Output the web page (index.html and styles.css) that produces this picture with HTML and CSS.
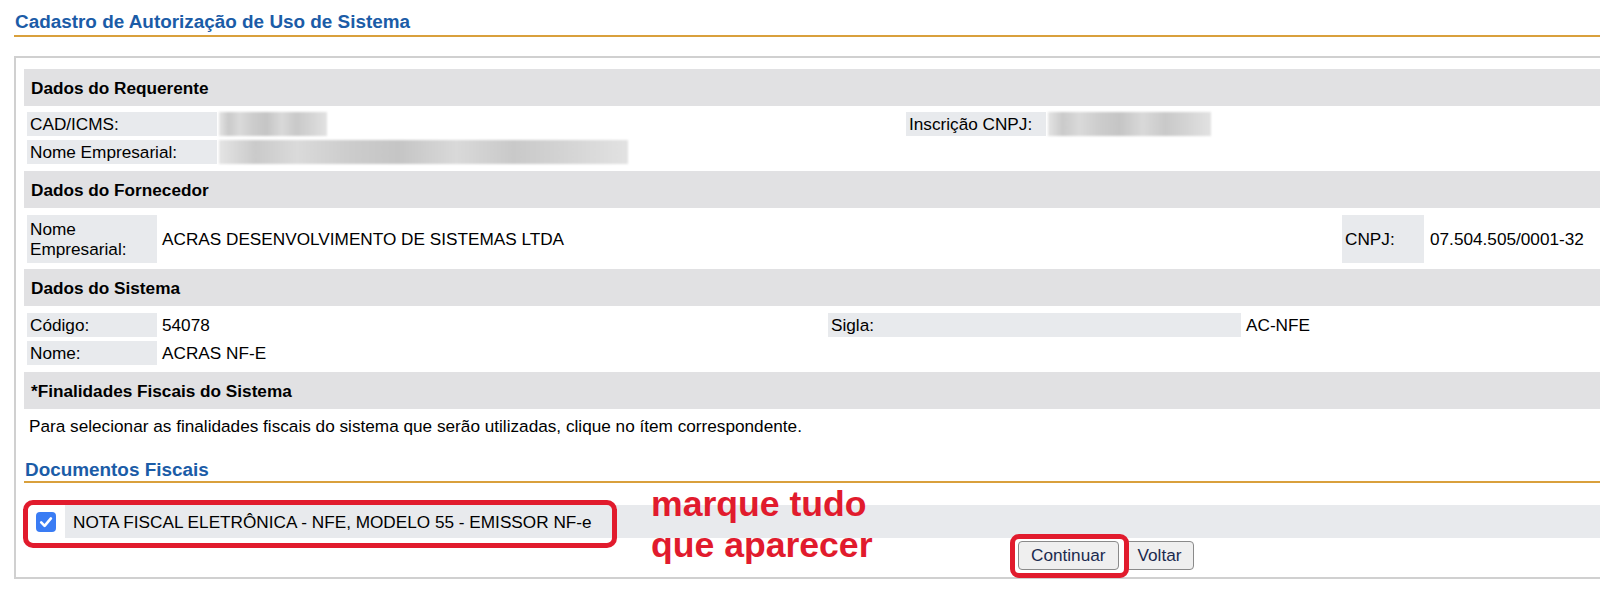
FILE: index.html
```html
<!DOCTYPE html>
<html lang="pt-BR">
<head>
<meta charset="utf-8">
<title>Cadastro de Autorização de Uso de Sistema</title>
<link rel="stylesheet" href="styles.css">
</head>
<body>
<div class="page">
  <h1 class="title">Cadastro de Autorização de Uso de Sistema</h1>
  <div class="panel">
    <section class="section">
      <div class="band">Dados do Requerente</div>
      <div class="rows grid-req">
        <div class="lbl">CAD/ICMS:</div>
        <div class="val blurcell"><span class="blur w-cad"></span></div>
        <div class="lbl">Inscrição CNPJ:</div>
        <div class="val blurcell"><span class="blur w-cnpj"></span></div>
        <div class="lbl">Nome Empresarial:</div>
        <div class="val blurcell"><span class="blur w-nome"></span></div>
      </div>
    </section>
    <section class="section">
      <div class="band">Dados do Fornecedor</div>
      <div class="rows grid-forn">
        <div class="lbl">Nome<br>Empresarial:</div>
        <div class="val">ACRAS DESENVOLVIMENTO DE SISTEMAS LTDA</div>
        <div class="lbl">CNPJ:</div>
        <div class="val val-cnpj">07.504.505/0001-32</div>
      </div>
    </section>
    <section class="section">
      <div class="band">Dados do Sistema</div>
      <div class="rows grid-sis">
        <div class="lbl">Código:</div>
        <div class="val">54078</div>
        <div class="lbl">Sigla:</div>
        <div class="val">AC-NFE</div>
        <div class="lbl">Nome:</div>
        <div class="val">ACRAS NF-E</div>
      </div>
    </section>
    <section class="section">
      <div class="band">*Finalidades Fiscais do Sistema</div>
      <p class="hint">Para selecionar as finalidades fiscais do sistema que serão utilizadas, clique no ítem correspondente.</p>
    </section>
    <h2 class="subtitle">Documentos Fiscais</h2>
    <div class="docwrap">
      <div class="docrow">
        <div class="chkcell">
          <span class="chk">
            <svg width="20" height="20" viewBox="0 0 20 20"><path d="M5.2 10.4 L8.6 13.8 L14.9 6.4" fill="none" stroke="#fff" stroke-width="2.6" stroke-linecap="round" stroke-linejoin="round"/></svg>
          </span>
        </div>
        <div class="doccell">NOTA FISCAL ELETRÔNICA - NFE, MODELO 55 - EMISSOR NF-e</div>
      </div>
      <span class="mark mark-doc"></span>
      <div class="note">marque tudo<br>que aparecer</div>
    </div>
    <div class="actions">
      <span class="btnwrap">
        <button class="btn" type="button">Continuar</button>
        <span class="mark mark-btn"></span>
      </span>
      <button class="btn" type="button">Voltar</button>
    </div>
  </div>
</div>
</body>
</html>
```

FILE: styles.css
```css
html, body {
  margin: 0;
  padding: 0;
  background: #ffffff;
}
body {
  overflow: hidden;
  font-family: "Liberation Sans", Arial, sans-serif;
  font-size: 17.2px;
  line-height: 20px;
  color: #000;
}
.page {
  padding-left: 14px;
}
.title {
  margin: 0;
  padding: 11px 0 2px 1px;
  font-size: 18.9px;
  line-height: 22px;
  font-weight: bold;
  color: #1b5ca7;
  border-bottom: 2px solid #d9a03c;
}
.panel {
  margin-top: 19px;
  border: 2px solid #d0d0d0;
  border-right: 0;
  padding: 11px 0 7px 8px;
}
.band {
  height: 37px;
  display: flex;
  align-items: center;
  padding-left: 7px;
  background: #e1e1e3;
  font-weight: bold;
}
.rows {
  display: grid;
  column-gap: 2px;
  row-gap: 4px;
  padding: 6px 0 7px 3px;
  grid-auto-rows: 24px;
}
.grid-req {
  grid-template-columns: 190px 685px 140px 1fr;
}
.grid-forn {
  grid-template-columns: 130px 1181px 82px 1fr;
  grid-auto-rows: 48px;
  padding-top: 7px;
  padding-bottom: 6px;
}
.grid-sis {
  grid-template-columns: 130px 667px 413px 1fr;
  padding-top: 7px;
}
.lbl {
  background: #e8eaed;
  padding-left: 3px;
  display: flex;
  align-items: center;
  white-space: nowrap;
}
.val {
  padding-left: 3px;
  display: flex;
  align-items: center;
  white-space: nowrap;
}
.val-cnpj {
  padding-left: 4px;
}
.blurcell {
  padding-left: 0;
  align-items: stretch;
}
.blur {
  display: block;
  height: 100%;
  background: linear-gradient(90deg, #e4e4e4 0%, #cacaca 9%, #dadada 19%, #cdcdcd 31%, #c5c5c5 44%, #d9d9d9 58%, #c9c9c9 72%, #d5d5d5 86%, #e2e2e2 100%);
  filter: blur(1px);
}
.w-cad { width: 108px; }
.w-cnpj { width: 163px; }
.w-nome { width: 409px; }
.hint {
  margin: 7px 0 0 2px;
  padding-left: 3px;
  line-height: 20px;
}
.subtitle {
  margin: 23px 0 0 0;
  padding-left: 1px;
  font-size: 18.9px;
  line-height: 22px;
  font-weight: bold;
  color: #1b5ca7;
  border-bottom: 2px solid #d9a03c;
}
.docwrap {
  position: relative;
  margin-top: 22px;
}
.docrow {
  display: flex;
  height: 33px;
}
.chkcell {
  width: 41px;
  display: flex;
  align-items: center;
  padding-left: 12px;
  box-sizing: border-box;
}
.chk {
  width: 20px;
  height: 20px;
  border-radius: 4px;
  background: #3a7cf4;
  display: block;
}
.chk svg {
  display: block;
}
.doccell {
  flex: 1;
  background: #e8eaed;
  display: flex;
  align-items: center;
  padding-left: 8px;
}
.mark {
  position: absolute;
  border: 5px solid #e11b2d;
  border-radius: 10px;
  box-sizing: border-box;
  pointer-events: none;
}
.mark-doc {
  left: -1px;
  top: -5px;
  width: 594px;
  height: 48px;
}
.note {
  position: absolute;
  left: 627px;
  top: -21px;
  font-size: 35.6px;
  line-height: 41px;
  font-weight: bold;
  color: #e11b2d;
  white-space: nowrap;
}
.actions {
  display: flex;
  gap: 6px;
  margin-top: 3px;
  padding-left: 994px;
}
.btnwrap {
  position: relative;
  display: flex;
}
.btn {
  height: 29px;
  padding: 0 12px;
  font-family: "Liberation Sans", Arial, sans-serif;
  font-size: 17.2px;
  color: #1b2a4e;
  background: #efefef;
  border: 1px solid #8a8a8a;
  border-radius: 4px;
}
.mark-btn {
  left: -8px;
  top: -7px;
  width: 119px;
  height: 44px;
  border-radius: 9px;
}
```
